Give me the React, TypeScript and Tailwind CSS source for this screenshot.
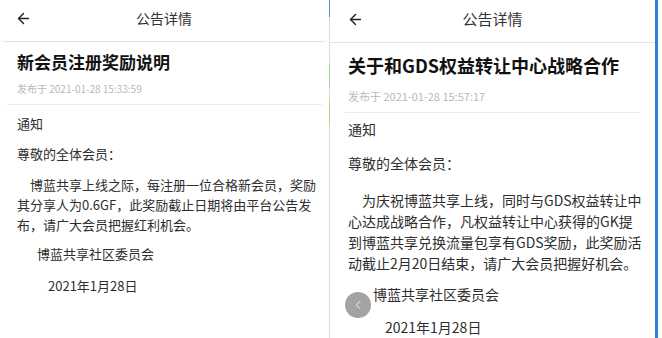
import { ArrowLeft, ChevronLeft } from 'lucide-react';

const font = { fontFamily: '"Noto Sans CJK SC", "Noto Sans", sans-serif' };

const LeftNotice = () => (
  <div className="flex w-[329px] shrink-0 flex-col bg-white">
    <div className="relative ml-[3px] mr-[4px] flex h-[42px] items-center justify-center border-b border-[#e3e3e3]">
      <ArrowLeft className="absolute top-[10px] left-[12px] text-[#222]" size={17} strokeWidth={2} />
      <span className="mb-[4px] text-[14px] text-[#333]">公告详情</span>
    </div>
    <div className="px-[17px] pt-[8px]">
      <h1 className="text-[17px] leading-[24px] font-bold text-[#111]">新会员注册奖励说明</h1>
      <p className="mt-[8px] text-[10px] leading-[14px] text-[#b8b8b8]">发布于 2021-01-28 15:33:59</p>
    </div>
    <div className="mx-[7px] mt-[8px] border-t border-[#ececec]" />
    <div className="px-[17px] text-[13px] leading-[20px] text-[#2e2e2e]">
      <p className="mt-[9px]">通知</p>
      <p className="mt-[10px]">尊敬的全体会员：</p>
      <p className="mt-[11px] w-[300px] indent-[13px]">
        博蓝共享上线之际，每注册一位合格新会员，奖励其分享人为0.6GF，此奖励截止日期将由平台公告发布，请广大会员把握红利机会。
      </p>
      <p className="mt-[9px] pl-[20px]">博蓝共享社区委员会</p>
      <p className="mt-[12px] pl-[31px]">2021年1月28日</p>
    </div>
  </div>
);

const RightNotice = () => (
  <div className="relative flex w-[325px] shrink-0 flex-col bg-white">
    <div className="relative flex h-[46px] items-center justify-center border-b border-[#e3e3e3]">
      <ArrowLeft className="absolute top-[11px] left-[17px] text-[#222]" size={17} strokeWidth={2} />
      <span className="mb-[4px] text-[15px] text-[#333]">公告详情</span>
    </div>
    <div className="px-[18px] pt-[9px]">
      <h1 className="text-[18px] leading-[26px] font-bold text-[#111]">关于和GDS权益转让中心战略合作</h1>
      <p className="mt-[11px] text-[11px] leading-[14px] text-[#b8b8b8]">发布于 2021-01-28 15:57:17</p>
    </div>
    <div className="mx-[15px] mt-[9px] border-t border-[#ececec]" />
    <div className="px-[18px] text-[14px] leading-[21px] text-[#2e2e2e]">
      <p className="mt-[6px]">通知</p>
      <p className="mt-[13px]">尊敬的全体会员：</p>
      <p className="mt-[16px] w-[298px] indent-[14px]">
        为庆祝博蓝共享上线，同时与GDS权益转让中心达成战略合作，凡权益转让中心获得的GK提到博蓝共享兑换流量包享有GDS奖励，此奖励活动截止2月20日结束，请广大会员把握好机会。
      </p>
      <p className="mt-[10px] pl-[25px]">博蓝共享社区委员会</p>
      <p className="mt-[12px] pl-[37px]">2021年1月28日</p>
    </div>
    <button className="absolute top-[292px] left-[15px] flex h-[26px] w-[26px] items-center justify-center rounded-full bg-[#a3a3a3]">
      <ChevronLeft className="text-white" size={14} strokeWidth={1.5} />
    </button>
  </div>
);

export default function App() {
  return (
    <div className="flex h-[338px] w-[662px] overflow-hidden bg-white" style={font}>
      <LeftNotice />
      <div className="flex w-px shrink-0 flex-col bg-[#dcdcdc]">
        <div className="h-[17px] bg-[#4a90d9]" />
        <div className="mt-[46px] h-[25px] bg-[#a6dc8c]" />
        <div className="mt-[12px] h-[25px] bg-[#a6dc8c]" />
      </div>
      <RightNotice />
      <div className="w-[3px] shrink-0 bg-[#2f7fd8]" />
      <div className="flex-1 bg-white" />
    </div>
  );
}
